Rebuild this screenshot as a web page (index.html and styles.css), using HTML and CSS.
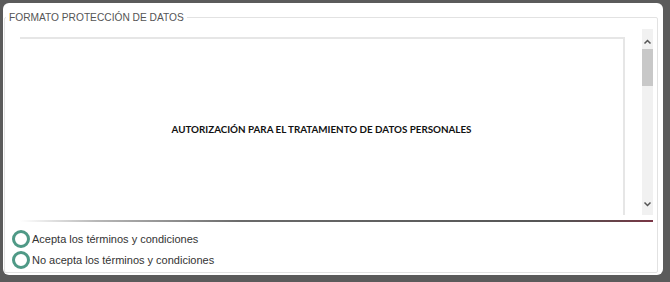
FILE: index.html
```html
<!DOCTYPE html>
<html lang="es">
<head>
<meta charset="utf-8">
<title>Formato protección de datos</title>
<link rel="stylesheet" href="styles.css">
</head>
<body>
<div class="card">
  <fieldset class="box">
    <legend class="box-title">FORMATO PROTECCIÓN DE DATOS</legend>
    <div class="viewer">
      <div class="page-wrap">
        <div class="page">
          <p class="doc-title">AUTORIZACIÓN PARA EL TRATAMIENTO DE DATOS PERSONALES</p>
        </div>
      </div>
      <div class="scrollbar">
        <svg class="arrow" width="11" height="10" viewBox="0 0 11 10"><path d="M2.5 6.5 L5.5 3.5 L8.5 6.5" fill="none" stroke="#555" stroke-width="1.5"/></svg>
        <div class="thumb"></div>
        <div class="track-fill"></div>
        <svg class="arrow" width="11" height="10" viewBox="0 0 11 10"><path d="M2.5 3.5 L5.5 6.5 L8.5 3.5" fill="none" stroke="#555" stroke-width="1.5"/></svg>
      </div>
    </div>
    <div class="divider"></div>
    <div class="options">
      <label class="option"><span class="radio"></span><span class="option-text">Acepta los términos y condiciones</span></label>
      <label class="option"><span class="radio"></span><span class="option-text">No acepta los términos y condiciones</span></label>
    </div>
  </fieldset>
</div>
</body>
</html>
```

FILE: styles.css
```css
html, body {
  margin: 0;
  padding: 0;
}
body {
  background: #5b5b5b;
  width: 670px;
  height: 282px;
  overflow: hidden;
  font-family: "Liberation Sans", Arial, sans-serif;
}
.card {
  box-sizing: border-box;
  margin: 3px 7px 0 3px;
  height: 272px;
  background: #fff;
  border-radius: 6px;
  padding: 8px 5px 2px 1px;
}
.box {
  box-sizing: border-box;
  margin: 0;
  height: 262px;
  border: 1px solid #e2e2e2;
  border-radius: 2px;
  padding: 0 4px 0 0;
}
.box-title {
  margin-left: 1px;
  padding: 0 3px;
  font-size: 10.2px;
  line-height: 13px;
  color: #555;
}
.viewer {
  display: flex;
  height: 186px;
  margin: 5px 0 0 15px;
}
.page-wrap {
  width: 605px;
  padding-top: 8px;
}
.page {
  box-sizing: border-box;
  height: 100%;
  border-top: 2px solid #e6e6e6;
  border-right: 2px solid #e6e6e6;
  padding-top: 84px;
}
.doc-title {
  margin: 0;
  text-align: center;
  font-family: Lato, "Open Sans", sans-serif;
  font-weight: 700;
  font-size: 9.8px;
  line-height: 13px;
  color: #111;
}
.scrollbar {
  margin-left: 17px;
  width: 11px;
  background: #f1f1f1;
  display: flex;
  flex-direction: column;
  padding-top: 8px;
}
.arrow {
  display: block;
  flex: none;
}
.thumb {
  height: 37px;
  background: #c8c8c8;
  margin-top: 2px;
}
.track-fill {
  flex: 1;
}
.scrollbar .arrow:last-child {
  margin-bottom: 6px;
}
.divider {
  height: 2px;
  margin: 5px 0 0 15px;
  background: linear-gradient(to right, #ffffff 0%, #b8b8b8 12%, #6a6a6a 35%, #555 85%, #6a4048 95%, #7a3545 100%);
}
.options {
  display: flex;
  flex-direction: column;
  gap: 3px;
  margin-top: 8px;
  padding-left: 7px;
}
.option {
  display: flex;
  align-items: center;
  gap: 2px;
  height: 18px;
}
.radio {
  box-sizing: border-box;
  width: 18px;
  height: 18px;
  border-radius: 50%;
  border: 3px solid #4f9986;
  flex: none;
}
.option-text {
  font-size: 11px;
  color: #333;
}
```
